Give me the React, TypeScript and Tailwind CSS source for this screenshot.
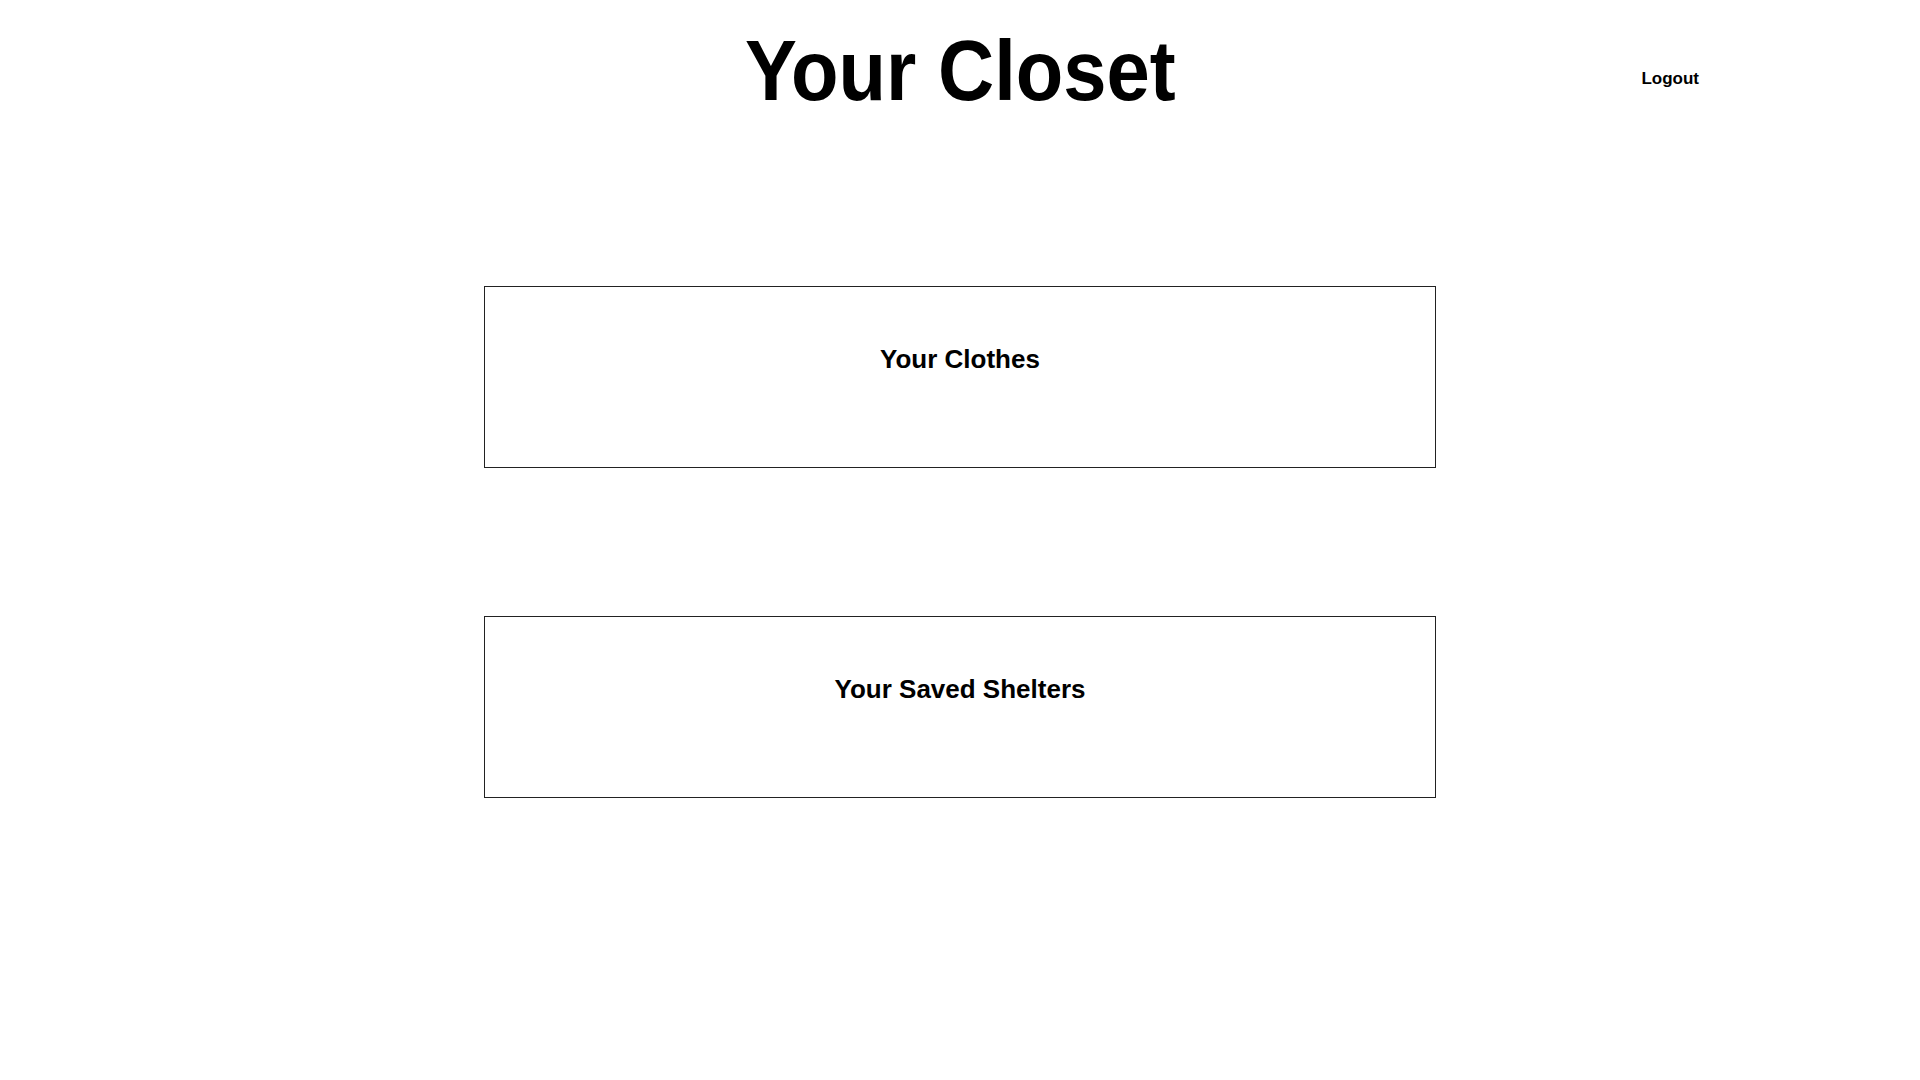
const sections = ['Your Clothes', 'Your Saved Shelters'];

const App = () => {
    return (
        <div className="min-h-screen bg-white text-black font-['Liberation_Sans',Arial,sans-serif]">
            <header className="grid grid-cols-[1fr_auto_1fr] items-start">
                <div />
                <h1 className="pt-[28px] text-[85px] leading-none font-bold">
                    <span className="inline-block scale-x-[0.915] origin-center">Your Closet</span>
                </h1>
                <div className="flex justify-end pr-[221px] pt-[70px]">
                    <button className="text-[17px] leading-none font-bold">Logout</button>
                </div>
            </header>

            <main className="flex flex-col items-center gap-[148px] pt-[173px]">
                {sections.map((title) => (
                    <div
                        key={title}
                        className="w-[952px] h-[182px] border border-[#222] pt-[59px] text-center"
                    >
                        <h2 className="text-[26px] leading-none font-bold">{title}</h2>
                    </div>
                ))}
            </main>
        </div>
    );
};

export default App;
